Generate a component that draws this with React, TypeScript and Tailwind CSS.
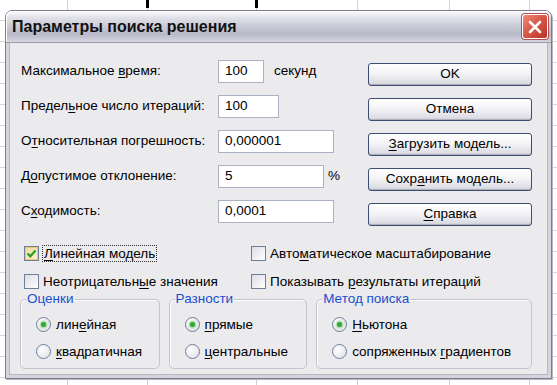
import React from "react";

const font = { fontFamily: '"Liberation Sans", Arial, sans-serif' };

function U({ children }: { children: React.ReactNode }) {
  return <span className="underline underline-offset-2">{children}</span>;
}

function Field({ width, value }: { width: string; value: string }) {
  return (
    <div className={`${width} flex h-[23px] items-center border border-[#a9b3c4] bg-white pl-[6px] text-[13.5px] text-black`}>
      {value}
    </div>
  );
}

function XpButton({ children }: { children: React.ReactNode }) {
  return (
    <button
      type="button"
      className="flex h-[23px] w-[164px] items-center justify-center rounded-[3px] border border-[#3d4f70] bg-[linear-gradient(to_bottom,#ffffff_0%,#f4f4f7_45%,#dcdce4_90%,#c8c8d2_100%)] text-[13.5px] text-black shadow-[inset_0_-1px_0_#b0b0bc]"
    >
      {children}
    </button>
  );
}

function CheckBox({ checked }: { checked?: boolean }) {
  return (
    <span
      className={`flex h-[15px] w-[15px] shrink-0 items-center justify-center border border-[#6e7f9c] ${
        checked
          ? "bg-[linear-gradient(135deg,#f0d89a,#fbf3d6)] shadow-[inset_0_0_0_1px_#f2c76a]"
          : "bg-[linear-gradient(135deg,#dcdce4,#ffffff)]"
      }`}
    >
      {checked ? (
        <svg width="11" height="11" viewBox="0 0 11 11">
          <path d="M1.5 5.5 L4.3 8.3 L9.5 2.5" fill="none" stroke="#21a121" strokeWidth="2.2" />
        </svg>
      ) : null}
    </span>
  );
}

function Radio({ checked }: { checked?: boolean }) {
  return (
    <span className="flex h-[15px] w-[15px] shrink-0 items-center justify-center rounded-full border border-[#6e7f9c] bg-[radial-gradient(circle_at_35%_35%,#ffffff,#dcdce6)]">
      {checked ? <span className="h-[5px] w-[5px] rounded-full bg-[#34a834] shadow-[0_0_2px_1px_#8fd08f]" /> : null}
    </span>
  );
}

function Group({
  title,
  width,
  items,
}: {
  title: string;
  width: string;
  items: { label: React.ReactNode; checked?: boolean }[];
}) {
  return (
    <div className={`${width} relative h-[70px] rounded-[5px] border border-[#c4c4cc] shadow-[inset_1px_1px_0_#ffffff]`}>
      <span className="absolute left-[5px] top-[-10px] bg-[#ebebee] px-[1px] text-[13.5px] leading-[17px] text-[#1b4fcf]">
        {title}
      </span>
      <div className="flex flex-col gap-[12px] pl-[15px] pt-[17px]">
        {items.map((it, i) => (
          <div key={i} className="flex items-center gap-[5px] text-[13.5px] leading-[15px] text-black">
            <Radio checked={it.checked} />
            <span>{it.label}</span>
          </div>
        ))}
      </div>
    </div>
  );
}

export default function App() {
  const cols = [68, 80, 109, 101, 92, 80, 40];
  const rows = [
    { label: <>Максимальное <U>в</U>ремя:</>, width: "w-[46px]", value: "100", suffix: "секунд" },
    { label: <>Предел<U>ь</U>ное число итераций:</>, width: "w-[61px]", value: "100" },
    { label: <>О<U>т</U>носительная погрешность:</>, width: "w-[116px]", value: "0,000001" },
    { label: <>Д<U>о</U>пустимое отклонение:</>, width: "w-[106px]", value: "5", suffix: "%" },
    { label: <>С<U>х</U>одимость:</>, width: "w-[116px]", value: "0,0001" },
  ];

  return (
    <div className="relative h-[385px] w-[557px] overflow-hidden bg-white" style={font}>
      {/* spreadsheet behind the dialog */}
      <div className="flex h-full bg-[repeating-linear-gradient(to_bottom,transparent_0px,transparent_20px,#d6d6d6_20px,#d6d6d6_21px)]">
        {cols.map((w, i) => (
          <div key={i} className="relative h-full shrink-0 border-r border-[#d0d0d0]" style={{ width: w }}>
            {i === 1 || i === 2 ? (
              <div className="absolute right-[-2px] top-0 h-[8px] w-[3px] bg-black" />
            ) : null}
          </div>
        ))}
      </div>

      {/* dialog window */}
      <div className="absolute left-[5px] top-[10px] flex h-[369px] w-[547px] flex-col rounded-t-[7px] border border-[#7c7c8e] bg-[#ebebee] shadow-[1px_1px_0_#b8b8c0]">
        <div className="flex h-[32px] shrink-0 items-center justify-between rounded-t-[6px] border-b border-[#9a9aaa] bg-[linear-gradient(to_bottom,#fdfdfe_0%,#e2e2ea_20%,#c6c6d4_55%,#b8b8c8_75%,#d6d6e0_100%)] pl-[6px] pr-[3px] shadow-[inset_1px_1px_0_#ffffff]">
          <span className="text-[16px] font-bold text-[#111]">Параметры поиска решения</span>
          <div className="flex h-[25px] w-[26px] items-center justify-center rounded-[3px] border border-white bg-[linear-gradient(135deg,#ec8a78_0%,#d95a48_45%,#b8342a_100%)] shadow-[0_0_0_1px_#b05050]">
            <svg width="14" height="14" viewBox="0 0 14 14">
              <path d="M2 2 L12 12 M12 2 L2 12" stroke="#ffffff" strokeWidth="2.6" strokeLinecap="round" />
            </svg>
          </div>
        </div>

        <div className="flex flex-1 flex-col border-x-[3px] border-b-[3px] border-[#d4d4dc] pl-[8px] pr-[16px] pt-[17px] shadow-[inset_1px_0_0_#b8b8c4,inset_-1px_0_0_#b8b8c4,inset_0_-1px_0_#b8b8c4]">
          <div className="flex">
            <div className="flex w-[359px] flex-col gap-[12px] pl-[4px]">
              {rows.map((r, i) => (
                <div key={i} className="flex h-[23px] items-center text-[13.5px] text-black">
                  <span className="w-[197px] shrink-0">{r.label}</span>
                  <Field width={r.width} value={r.value} />
                  {r.suffix ? <span className={r.suffix === "%" ? "ml-[4px]" : "ml-[10px]"}>{r.suffix}</span> : null}
                </div>
              ))}
            </div>
            <div className="flex flex-col gap-[12px] pt-[3px]">
              <XpButton>OK</XpButton>
              <XpButton>Отмена</XpButton>
              <XpButton>
                <U>З</U>агрузить модель...
              </XpButton>
              <XpButton>
                Сохр<U>а</U>нить модель...
              </XpButton>
              <XpButton>
                <U>С</U>правка
              </XpButton>
            </div>
          </div>

          <div className="mt-[19px] flex flex-col gap-[12px] pl-[7px] text-[13.5px] leading-[15px] text-black">
            <div className="flex">
              <div className="flex w-[227px] items-center gap-[3px]">
                <CheckBox checked />
                <span className="border border-dotted border-[#333] px-[1px]">
                  <U>Л</U>инейная модель
                </span>
              </div>
              <div className="flex items-center gap-[4px]">
                <CheckBox />
                <span>
                  Авто<U>м</U>атическое масштабирование
                </span>
              </div>
            </div>
            <div className="flex">
              <div className="flex w-[227px] items-center gap-[4px]">
                <CheckBox />
                <span>
                  Неотрицательн<U>ы</U>е значения
                </span>
              </div>
              <div className="flex items-center gap-[4px]">
                <CheckBox />
                <span>
                  Показывать <U>р</U>езультаты итераций
                </span>
              </div>
            </div>
          </div>

          <div className="mt-[10px] flex gap-[9px] pl-[3px]">
            <Group
              title="Оценки"
              width="w-[141px]"
              items={[
                { label: <>лин<U>е</U>йная</>, checked: true },
                { label: <><U>к</U>вадратичная</> },
              ]}
            />
            <Group
              title="Разности"
              width="w-[140px]"
              items={[
                { label: <><U>п</U>рямые</>, checked: true },
                { label: <><U>ц</U>ентральные</> },
              ]}
            />
            <Group
              title="Метод поиска"
              width="w-[218px]"
              items={[
                { label: <><U>Н</U>ьютона</>, checked: true },
                { label: <>сопряженных <U>г</U>радиентов</> },
              ]}
            />
          </div>
        </div>
      </div>
    </div>
  );
}
